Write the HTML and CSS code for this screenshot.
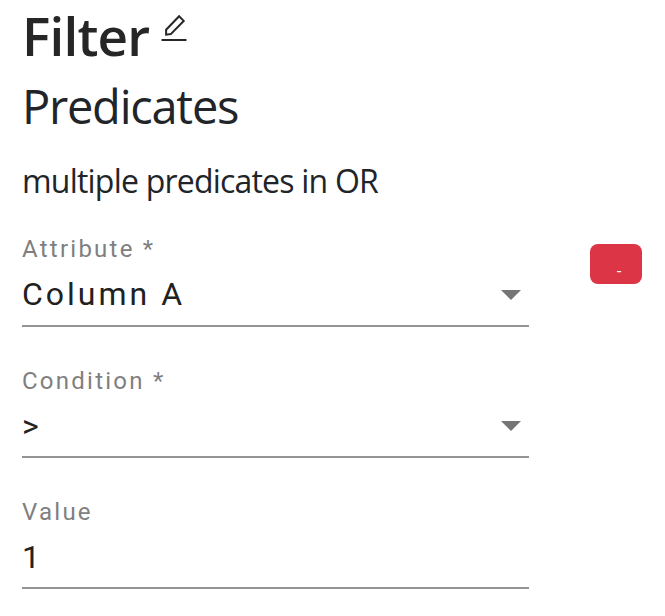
FILE: index.html
```
<!DOCTYPE html>
<html lang="en">
<head>
<meta charset="utf-8">
<title>Filter</title>
<link rel="stylesheet" href="styles.css">
</head>
<body>
<main class="panel">
  <header class="heading">
    <h1 class="title">Filter</h1>
    <svg class="edit" viewBox="0 0 26 28" width="26" height="28" fill="none" stroke="#262626" stroke-width="2">
      <path d="M5.1 20.7V15.7L18.1 2.3L22.7 6.9L9.8 20.1Z"/>
      <path d="M0.5 26H25.5"/>
    </svg>
  </header>
  <h2 class="subtitle">Predicates</h2>
  <p class="note">multiple predicates in OR</p>
  <div class="row">
    <form class="fields">
      <div class="field">
        <label class="label">Attribute *</label>
        <div class="control"><span class="option">Column A</span><i class="arrow"></i></div>
      </div>
      <div class="field">
        <label class="label">Condition *</label>
        <div class="control"><span>&gt;</span><i class="arrow"></i></div>
      </div>
      <div class="field">
        <label class="label">Value</label>
        <div class="control"><span>1</span></div>
      </div>
    </form>
    <button class="remove" type="button"><span class="minus">-</span></button>
  </div>
</main>
</body>
</html>
```
FILE: styles.css
```
* { box-sizing: border-box; }
body {
  margin: 0;
  background: #fff;
  color: #212529;
  font-family: "Open Sans", "Noto Sans", sans-serif;
}
.panel { padding: 5px 23px 0 22px; }
.heading { display: flex; align-items: flex-start; gap: 12px; color: #262626; }
.title { margin: 0; font-size: 53px; line-height: 62px; font-weight: 600; letter-spacing: -0.8px; }
.edit { margin-top: 9px; }
.subtitle { margin: 11px 0 23px; font-size: 47px; line-height: 56px; font-weight: 400; letter-spacing: -1.25px; }
.note { margin: 0 0 28px; font-size: 32px; line-height: 48px; letter-spacing: -0.79px; }
.row { display: flex; justify-content: space-between; align-items: flex-start; }
.fields { width: 507px; font-family: Roboto, sans-serif; }
.field { height: 94px; margin-bottom: 37px; border-bottom: 2px solid #949494; }
.field + .field { padding-top: 1px; }
.label { display: block; height: 37px; font-size: 24px; line-height: 32px; letter-spacing: 2.25px; color: #7f7f7f; }
.control {
  display: flex;
  justify-content: space-between;
  align-items: center;
  height: 48px;
  padding-right: 8px;
  font-size: 32px;
  line-height: 48px;
  color: #212121;
}
.option { letter-spacing: 3px; }
.arrow { border: 10px solid transparent; border-top-color: #757575; border-bottom: 0; margin-top: 2px; }
.field + .field .arrow { margin-top: 0; }
.remove {
  width: 52px;
  height: 40px;
  margin-top: 11px;
  padding: 0 0 0 6px;
  border: 0;
  border-radius: 8px;
  background: #dc3545;
  color: #fff;
  font: 16px/40px "Open Sans", sans-serif;
}
.minus { display: block; padding-top: 6px; }
```
